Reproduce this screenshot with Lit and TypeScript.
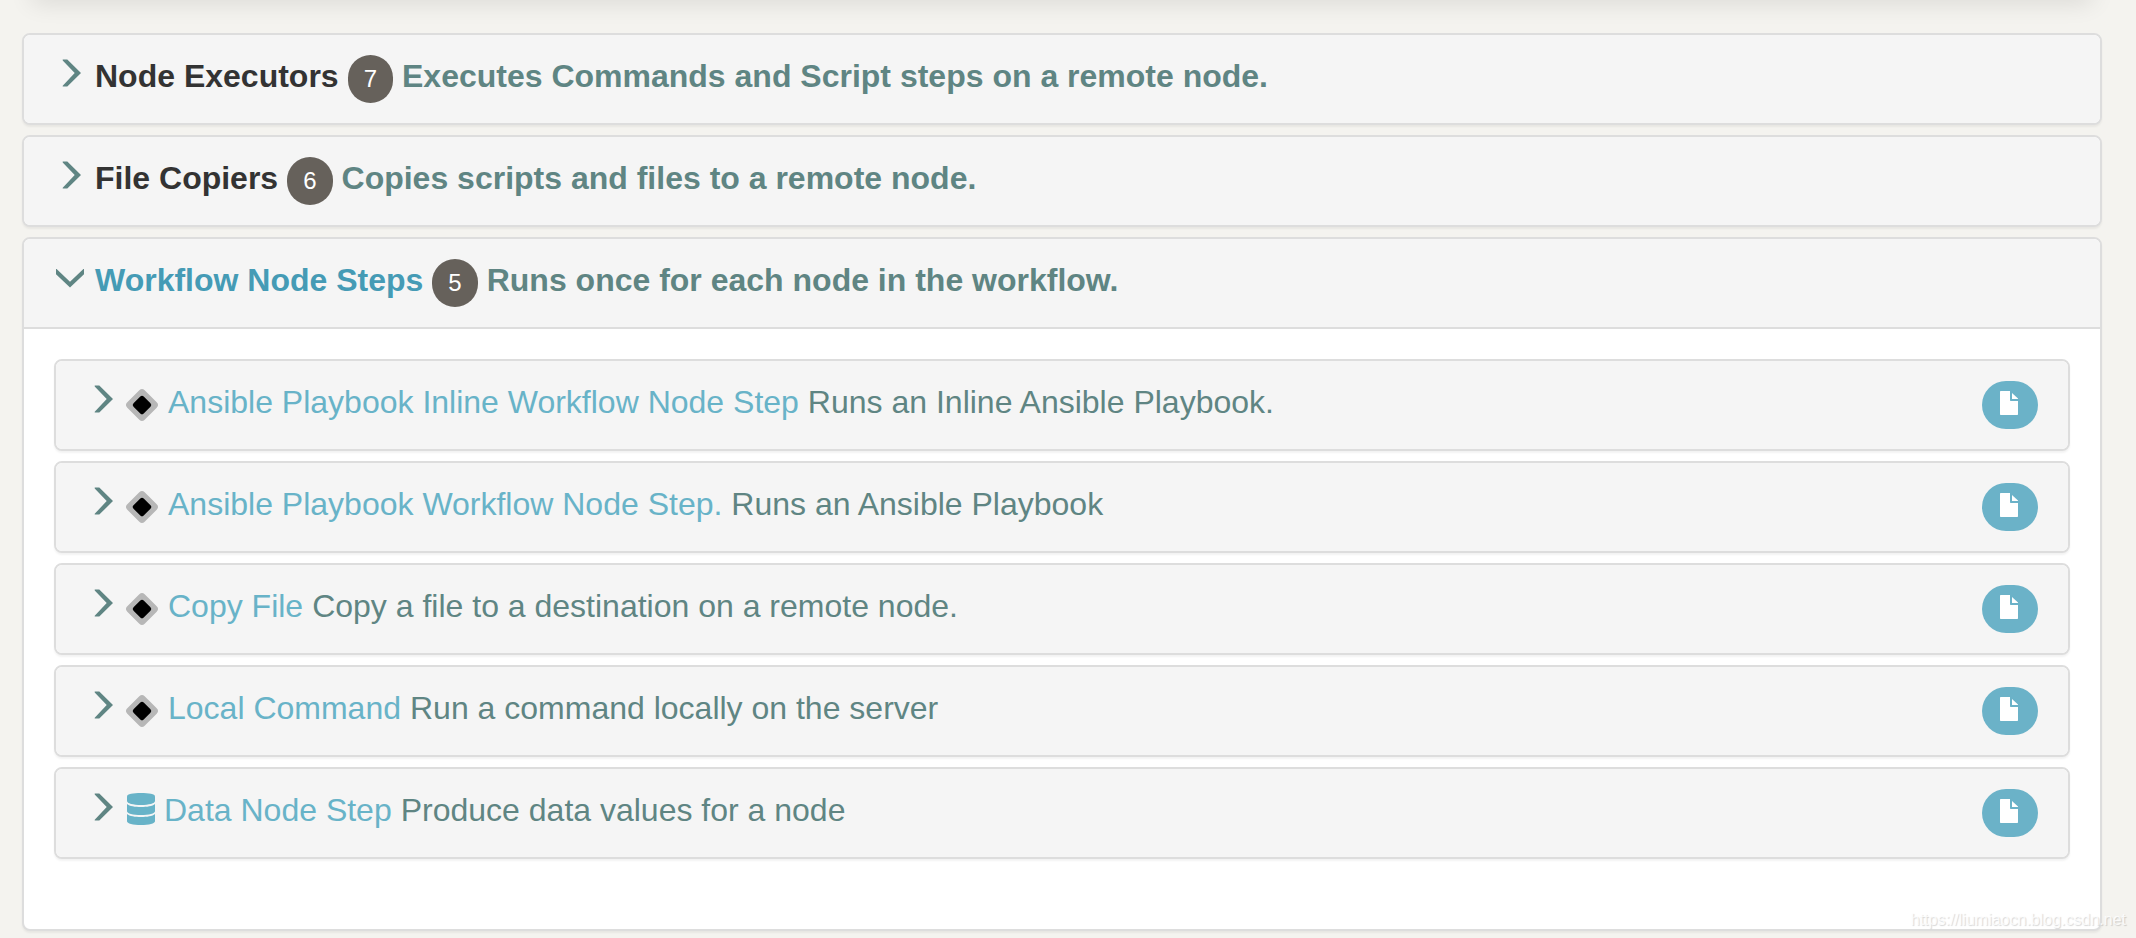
import { LitElement, html, css, svg, nothing } from "lit";
import { customElement, property, state } from "lit/decorators.js";

interface Step {
  name: string;
  description: string;
  icon: "plugin" | "data";
}

interface Group {
  name: string;
  count: number;
  description: string;
  steps: Step[];
}

const GROUPS: Group[] = [
  {
    name: "Node Executors",
    count: 7,
    description: "Executes Commands and Script steps on a remote node.",
    steps: [],
  },
  {
    name: "File Copiers",
    count: 6,
    description: "Copies scripts and files to a remote node.",
    steps: [],
  },
  {
    name: "Workflow Node Steps",
    count: 5,
    description: "Runs once for each node in the workflow.",
    steps: [
      { name: "Ansible Playbook Inline Workflow Node Step", description: "Runs an Inline Ansible Playbook.", icon: "plugin" },
      { name: "Ansible Playbook Workflow Node Step.", description: "Runs an Ansible Playbook", icon: "plugin" },
      { name: "Copy File", description: "Copy a file to a destination on a remote node.", icon: "plugin" },
      { name: "Local Command", description: "Run a command locally on the server", icon: "plugin" },
      { name: "Data Node Step", description: "Produce data values for a node", icon: "data" },
    ],
  },
];

const chevronRight = svg`<path d="M8.7 4.6H13.3L27 18.1L13.3 31.6H8.7V30.8L20.7 18.1L8.7 5.4Z"/>`;
const chevronDown = svg`<path d="M2 10H2.6L16 22.7L29.4 10H30V15.2L16 28.5L2 15.2Z"/>`;

const sharedStyles = css`
  * {
    box-sizing: border-box;
  }
  .panel {
    border: 2px solid #ddd;
    border-radius: 8px;
    background: #fff;
    box-shadow: 0 2px 2px rgba(0, 0, 0, 0.05);
  }
  .heading {
    display: flex;
    align-items: flex-start;
    gap: 9px;
    margin: 0;
    padding: 20px 30px;
    border-radius: 6px;
    background: #f5f5f5;
    font-size: 32px;
    line-height: 42px;
  }
  .toggle {
    display: flex;
    align-items: flex-start;
    gap: 9px;
    padding: 0;
    border: 0;
    background: none;
    color: inherit;
    font: inherit;
    cursor: pointer;
  }
  .chevron {
    display: block;
    flex: none;
    height: 48px;
    fill: #5f8583;
  }
  .description {
    color: #5f8583;
  }
`;

@customElement("step-panel")
class StepPanel extends LitElement {
  @property({ attribute: false }) step!: Step;

  static styles = [
    sharedStyles,
    css`
      :host {
        display: block;
      }
      .heading {
        font-weight: 400;
      }
      .chevron {
        width: 31px;
      }
      .name {
        color: #68b3c8;
      }
      .plugin {
        display: block;
        width: 33px;
        height: 48px;
      }
      .data {
        display: block;
        width: 29px;
        height: 48px;
        fill: #68b3c8;
      }
      .open {
        display: flex;
        flex: none;
        justify-content: center;
        width: 56px;
        height: 48px;
        margin-left: auto;
        padding: 10px 0 0;
        border: 0;
        border-radius: 24px;
        background: #6bb2c8;
        cursor: pointer;
      }
      .file {
        display: block;
        width: 20px;
        height: 24px;
        fill: #fff;
      }
    `,
  ];

  private icon() {
    return this.step.icon === "plugin"
      ? html`<svg class="plugin" viewBox="0 0 33 48" aria-hidden="true">
          <rect x="3.7" y="11.7" width="24.6" height="24.6" rx="3.8" fill="#b7b7b7" transform="rotate(45 16 24)" />
          <rect x="8.8" y="16.8" width="14.4" height="14.4" rx="2.4" fill="#000" transform="rotate(45 16 24)" />
        </svg>`
      : html`<svg class="data" viewBox="0 0 29 48" aria-hidden="true">
          <path d="M1 7.4C1 5 7 4 15 4S29 5 29 7.4V12C29 14.4 23 16 15 16S1 14.4 1 12Z" />
          <path d="M1 15C3.6 17.2 9 18 15 18S26.4 17.2 29 15V22.2C29 24.6 23 26 15 26S1 24.6 1 22.2Z" />
          <path d="M1 25C3.6 27.2 9 28 15 28S26.4 27.2 29 25V32.2C29 34.6 23 36 15 36S1 34.6 1 32.2Z" />
        </svg>`;
  }

  render() {
    return html`
      <div class="panel">
        <h5 class="heading">
          <button class="toggle" type="button" aria-expanded="false">
            <svg class="chevron" viewBox="0 0 31 48" aria-hidden="true">${chevronRight}</svg>
            ${this.icon()}
            <span class="name">${this.step.name}</span>
          </button>
          <span class="description">${this.step.description}</span>
          <button class="open" type="button" aria-label=${`Open ${this.step.name}`}>
            <svg class="file" viewBox="0 0 20 24" aria-hidden="true">
              <path d="M0 0H10V9.3Q10 10 10.7 10H18V23.3Q18 24 17.3 24H0.7Q0 24 0 23.3V0.7Q0 0 0.7 0Z" />
              <path d="M12 2L18 7.6V8H12Z" />
            </svg>
          </button>
        </h5>
      </div>
    `;
  }
}

@customElement("group-panel")
class GroupPanel extends LitElement {
  @property({ attribute: false }) group!: Group;
  @property({ type: Boolean }) open = false;

  static styles = [
    sharedStyles,
    css`
      :host {
        display: block;
      }
      .heading {
        font-weight: 700;
      }
      .heading.expanded {
        border-bottom: 2px solid #ddd;
        border-radius: 6px 6px 0 0;
      }
      .chevron {
        width: 32px;
      }
      .name {
        color: #333;
      }
      .expanded .name {
        color: #459bb5;
      }
      .badge {
        flex: none;
        padding: 0 16px;
        border-radius: 24px;
        background: #66615b;
        color: #fff;
        font-size: 24px;
        font-weight: 400;
        line-height: 48px;
      }
      .body {
        display: flex;
        flex-direction: column;
        gap: 10px;
        padding: 30px 30px 70px;
      }
    `,
  ];

  render() {
    return html`
      <section class="panel">
        <h4 class="heading ${this.open ? "expanded" : ""}">
          <button
            class="toggle"
            type="button"
            aria-expanded=${this.open ? "true" : "false"}
            @click=${() => (this.open = !this.open)}
          >
            <svg class="chevron" viewBox="0 0 32 48" aria-hidden="true">
              ${this.open ? chevronDown : chevronRight}
            </svg>
            <span class="name">${this.group.name}</span>
          </button>
          <span class="badge">${this.group.count}</span>
          <span class="description">${this.group.description}</span>
        </h4>
        ${this.open
          ? html`<div class="body">
              ${this.group.steps.map((step) => html`<step-panel .step=${step}></step-panel>`)}
            </div>`
          : nothing}
      </section>
    `;
  }
}

@customElement("app-root")
class AppRoot extends LitElement {
  @state() private groups = GROUPS;

  static styles = css`
    :host {
      display: block;
      position: relative;
      min-height: 100vh;
      overflow: hidden;
      background: #f4f3ef;
      font-family: "Liberation Sans", Arial, Helvetica, sans-serif;
    }
    .card-edge {
      height: 40px;
      margin: -40px 34px 0 22px;
      background: #fff;
      box-shadow: 0 12px 24px -10px rgba(0, 0, 0, 0.12);
    }
    .groups {
      display: flex;
      flex-direction: column;
      gap: 10px;
      padding: 33px 34px 0 22px;
    }
    .watermark {
      position: absolute;
      right: 10px;
      bottom: 8px;
      color: rgba(255, 255, 255, 0.8);
      font-size: 16px;
      line-height: 20px;
      text-shadow: 1px 1px 1px rgba(0, 0, 0, 0.16);
    }
  `;

  render() {
    return html`
      <div class="card-edge"></div>
      <main class="groups">
        ${this.groups.map(
          (group) => html`<group-panel .group=${group} ?open=${group.steps.length > 0}></group-panel>`,
        )}
      </main>
      <div class="watermark">https://liumiaocn.blog.csdn.net</div>
    `;
  }
}
